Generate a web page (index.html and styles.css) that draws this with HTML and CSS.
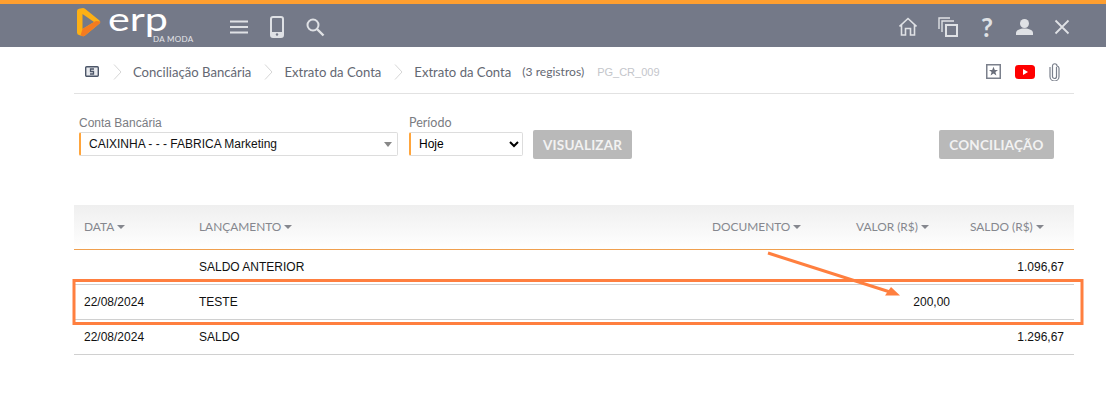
FILE: index.html
```html
<!DOCTYPE html>
<html lang="pt-BR">
<head>
<meta charset="utf-8">
<title>Extrato da Conta</title>
<link rel="stylesheet" href="styles.css">
</head>
<body>
<header class="topbar">
  <div class="brand">
    <svg class="brand-mark" width="24" height="29" viewBox="0 0 24 29">
      <path d="M0 3Q0 1 2 .7L6 0Q7 0 8 .7L22.500 12.500Q24 14 22.500 15.500L8 27.500Q7 28.500 6 28.200L2 27Q0 26.500 0 24.500Z" fill="#fdb015"/>
      <path d="M5.500 6L17 14L5.500 21Z" fill="#747988"/>
      <path d="M23.200 13.500Q24 14 22.500 15.500L8 27.500Q7 28.500 6 28.200L3.500 27.500L5.500 21L17 14L19 13Z" fill="#f47b20"/>
    </svg>
    <div class="brand-text"><span class="brand-name">erp</span><span class="brand-sub">DA MODA</span></div>
  </div>
  <div class="tools">
    <svg width="18" height="14" viewBox="0 0 18 14"><path d="M0 1.500H18M0 7H18M0 12.500H18" stroke="#dfe1e5" stroke-width="2" fill="none"/></svg>
    <svg width="14" height="22" viewBox="0 0 14 22"><rect x="1" y="1" width="12" height="20" rx="2" fill="none" stroke="#dfe1e5" stroke-width="2"/><rect x="1" y="16" width="12" height="5" fill="#dfe1e5"/><circle cx="7" cy="18.500" r="1.200" fill="#747988"/></svg>
    <svg width="20" height="20" viewBox="0 0 20 20"><circle cx="8" cy="8" r="5.500" fill="none" stroke="#dfe1e5" stroke-width="2"/><path d="M12 12L18.500 18.500" stroke="#dfe1e5" stroke-width="2.400"/></svg>
  </div>
  <div class="actions">
    <svg width="18" height="19" viewBox="0 0 18 19"><path d="M.5 9.500L9 1.500L17.500 9.500M2.500 8V18H6.500V11.500H11.500V18H15.500V8" fill="none" stroke="#dfe1e5" stroke-width="1.600"/></svg>
    <svg width="20" height="20" viewBox="0 0 20 20"><path d="M1 12V1H12M4 15V4H16" fill="none" stroke="#dfe1e5" stroke-width="1.400"/><rect x="8" y="8" width="11" height="11" fill="none" stroke="#dfe1e5" stroke-width="2"/></svg>
    <span class="help">?</span>
    <svg width="17" height="16" viewBox="0 0 17 16"><circle cx="8.500" cy="4.500" r="4.500" fill="#dfe1e5"/><path d="M0 16V14C0 11 4 9.500 8.500 9.500S17 11 17 14V16Z" fill="#dfe1e5"/></svg>
    <svg width="16" height="16" viewBox="0 0 16 16"><path d="M1.500 1.500L14.500 14.500M14.500 1.500L1.500 14.500" stroke="#dfe1e5" stroke-width="1.800"/></svg>
  </div>
</header>

<main class="page">
  <nav class="crumbs">
    <svg class="crumb-icon" width="14" height="11" viewBox="0 0 14 11"><rect x=".7" y=".7" width="12.600" height="9.600" rx="1" fill="#e8eaee" stroke="#4c5668" stroke-width="1.400"/><path d="M9 3H5.500V5.500H8.500V8H5" fill="none" stroke="#4c5668" stroke-width="1.300"/></svg>
    <svg class="chev" width="9" height="16" viewBox="0 0 9 16"><path d="M1 .5L8 8L1 15.500" fill="none" stroke="#d6d6d6"/></svg>
    <span class="crumb">Conciliação Bancária</span>
    <svg class="chev" width="9" height="16" viewBox="0 0 9 16"><path d="M1 .5L8 8L1 15.500" fill="none" stroke="#d6d6d6"/></svg>
    <span class="crumb">Extrato da Conta</span>
    <svg class="chev" width="9" height="16" viewBox="0 0 9 16"><path d="M1 .5L8 8L1 15.500" fill="none" stroke="#d6d6d6"/></svg>
    <span class="crumb crumb-last">Extrato da Conta</span>
    <span class="count">(3 registros)</span>
    <span class="code">PG_CR_009</span>
    <div class="crumb-tools">
      <svg width="15" height="15" viewBox="0 0 15 15"><rect x=".75" y=".75" width="13.500" height="13.500" fill="none" stroke="#7b808c" stroke-width="1.500"/><path d="M7.500 2.800L8.800 6H12L9.400 8.100L10.400 11.500L7.500 9.500L4.600 11.500L5.600 8.100L3 6H6.200Z" fill="#6a6f7b"/></svg>
      <svg width="20" height="14" viewBox="0 0 20 14"><rect width="20" height="14" rx="3.500" fill="#f00"/><path d="M8 4L13 7L8 10Z" fill="#fff"/></svg>
      <svg width="11" height="18" viewBox="0 0 11 18"><path d="M7.500 4V13.500A2 2 0 0 1 3.500 13.500V3A2.200 2.200 0 0 1 8 3A2.500 2.500 0 0 1 10 5V13.500A4.500 4.500 0 0 1 1 13.500V4" fill="none" stroke="#7b808c" stroke-width="1.200"/></svg>
    </div>
  </nav>

  <form class="filters">
    <div class="field field-account">
      <label class="field-label">Conta Bancária</label>
      <div class="fake-select"><span>CAIXINHA - - - FABRICA Marketing</span><i class="caret-select"></i></div>
    </div>
    <div class="field field-period">
      <label class="field-label" for="periodo">Período</label>
      <select id="periodo" class="native-select"><option>Hoje</option></select>
    </div>
    <button type="button" class="btn">VISUALIZAR</button>
    <button type="button" class="btn btn-right">CONCILIAÇÃO</button>
  </form>

  <table class="grid">
    <colgroup><col class="c1"><col class="c2"><col class="c3"><col class="c4"><col class="c5"></colgroup>
    <thead>
      <tr>
        <th>DATA<i class="caret"></i></th>
        <th>LANÇAMENTO<i class="caret"></i></th>
        <th>DOCUMENTO<i class="caret"></i></th>
        <th>VALOR (R$)<i class="caret"></i></th>
        <th>SALDO (R$)<i class="caret"></i></th>
      </tr>
    </thead>
    <tbody>
      <tr><td></td><td>SALDO ANTERIOR</td><td></td><td></td><td class="num">1.096,67</td></tr>
      <tr><td>22/08/2024</td><td>TESTE</td><td></td><td class="num">200,00</td><td></td></tr>
      <tr><td>22/08/2024</td><td>SALDO</td><td></td><td></td><td class="num">1.296,67</td></tr>
    </tbody>
  </table>
</main>

<svg class="annotation" width="1106" height="407" viewBox="0 0 1106 407">
  <rect x="74" y="280.500" width="1008" height="43" fill="none" stroke="#ff7f3f" stroke-width="3"/>
  <path d="M768 253L890 292" stroke="#ff7f3f" stroke-width="3"/>
  <path d="M900 295.500L885 295.500L891 287Z" fill="#ff7f3f"/>
</svg>
</body>
</html>
```
FILE: styles.css
```css
* { box-sizing: border-box; }
html, body { margin: 0; padding: 0; }
body {
  width: 1106px;
  height: 407px;
  overflow: hidden;
  background: #fff;
  font-family: "Liberation Sans", Arial, sans-serif;
  position: relative;
}
.topbar {
  height: 47px;
  background: #747988;
  border-top: 4px solid #ff9f2f;
  display: flex;
  align-items: center;
  padding-left: 77px;
  padding-right: 36px;
}
.brand { display: flex; align-items: flex-start; width: 153px; height: 43px; padding-top: 4px; }
.brand-mark { flex: none; }
.brand-text { position: relative; margin-left: 7px; width: 88px; height: 39px; }
.brand-name {
  display: block;
  font-family: Lato, sans-serif;
  font-weight: 400;
  font-size: 33px;
  line-height: 21px;
  color: #fff;
  transform: scaleX(1.25);
  transform-origin: left center;
}
.brand-sub {
  position: absolute;
  left: 45px;
  top: 26px;
  font-family: Lato, sans-serif;
  font-size: 8px;
  line-height: 10px;
  color: #e4e5e9;
  white-space: nowrap;
  letter-spacing: .3px;
}
.tools { display: flex; align-items: center; gap: 21.500px; padding-top: 2px; }
.actions { margin-left: auto; display: flex; align-items: center; gap: 21px; padding-top: 2px; }
.help {
  font-family: Lato, sans-serif;
  font-size: 26px;
  font-weight: 700;
  line-height: 24px;
  width: 16px;
  text-align: center;
  color: #dfe1e5;
}
.page { padding: 0 32px 0 74px; }
.crumbs {
  height: 47px;
  border-bottom: 1px solid #e2e2e2;
  display: flex;
  align-items: center;
  padding-left: 11px;
  padding-top: 3px;
}
.crumb-icon { flex: none; margin-right: 14px; }
.chev { flex: none; margin-right: 11px; }
.crumb {
  font-family: Lato, sans-serif;
  font-size: 13.100px;
  color: #646873;
  margin-right: 13px;
}
.crumb-last { margin-right: 11px; }
.count { font-family: Lato, sans-serif; font-size: 12.100px; color: #646873; margin-right: 13px; }
.code { font-family: "Liberation Sans", sans-serif; font-size: 11px; color: #c4c6cb; }
.crumb-tools { margin-left: auto; margin-right: 14px; display: flex; align-items: center; gap: 14px; }
.filters {
  display: flex;
  align-items: flex-end;
  padding: 0 20px 0 5px;
  height: 65px;
}
.field { display: flex; flex-direction: column; margin-bottom: 3px; }
.field-account { width: 319px; }
.field-period { width: 114px; margin-left: 11px; }
.field-label {
  font-size: 12px;
  line-height: 14px;
  color: #7a7c82;
  margin-bottom: 2px;
}
.field-period .field-label { font-family: Lato, sans-serif; font-size: 12.500px; }
.fake-select {
  height: 24px;
  border: 1px solid #ddd;
  border-left: 2px solid #ffa53c;
  border-radius: 2px;
  display: flex;
  align-items: center;
  justify-content: space-between;
  padding: 0 5px 0 8px;
  font-size: 12px;
  color: #111;
}
.caret-select {
  width: 0; height: 0;
  border-left: 4px solid transparent;
  border-right: 4px solid transparent;
  border-top: 5px solid #888;
}
.native-select {
  height: 24px;
  width: 114px;
  border: 1px solid #ddd;
  border-left: 2px solid #ffa53c;
  border-radius: 2px;
  background: #fff;
  font-family: "Liberation Sans", sans-serif;
  font-size: 12px;
  color: #000;
  padding-left: 4px;
}
.btn {
  height: 29px;
  border: 0;
  border-radius: 2px;
  background: #b9b9b9;
  color: #f2f2f2;
  font-family: Lato, sans-serif;
  font-size: 13.500px;
  font-weight: 700;
  letter-spacing: .2px;
  padding: 0 10px;
  margin-left: 10px;
}
.btn-right { margin-left: auto; padding: 0 10.500px; }
.grid {
  margin-top: 46px;
  width: 1000px;
  border-collapse: separate;
  border-spacing: 0;
  table-layout: fixed;
}
.c1 { width: 115px; }
.c2 { width: 513px; }
.c3 { width: 144px; }
.c4 { width: 114px; }
.c5 { width: 114px; }
.grid th {
  height: 45px;
  padding: 0 10px 2px;
  text-align: left;
  font-family: Lato, sans-serif;
  font-size: 11.900px;
  font-weight: 400;
  color: #85878e;
  background: linear-gradient(#efefef, #fff);
  border-bottom: 1px solid #f0a04f;
  white-space: nowrap;
}
.caret {
  display: inline-block;
  width: 0; height: 0;
  margin-left: 3px;
  vertical-align: 2px;
  border-left: 4px solid transparent;
  border-right: 4px solid transparent;
  border-top: 4px solid #85878e;
}
.grid td {
  height: 35px;
  padding: 0 10px;
  font-size: 12px;
  color: #111;
  border-bottom: 1px solid #d0d0d0;
  white-space: nowrap;
}
.grid .num { text-align: right; }
.annotation { position: absolute; left: 0; top: 0; pointer-events: none; }
```
